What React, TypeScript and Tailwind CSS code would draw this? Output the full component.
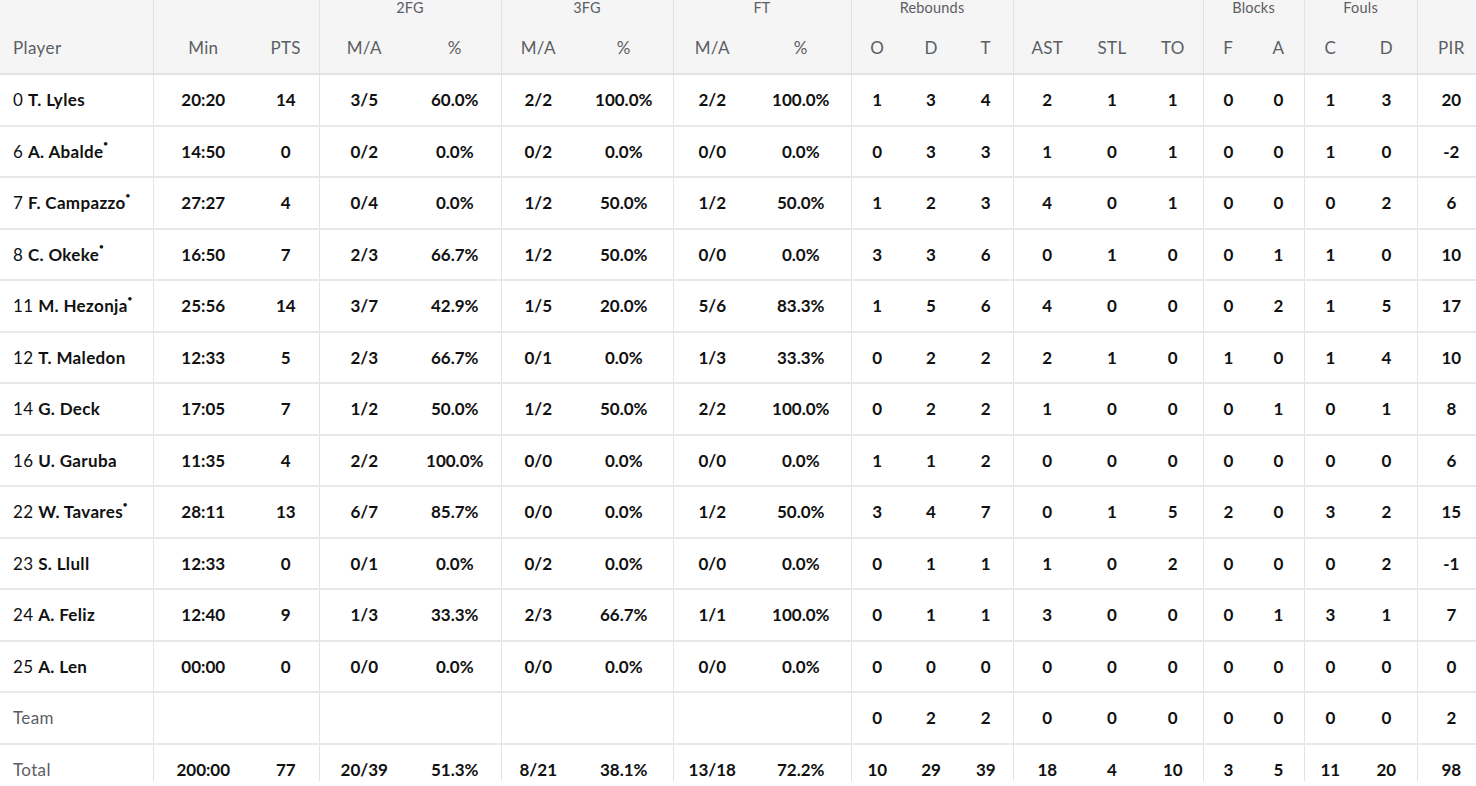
type Row = {
   no?: string;
   name: string;
   starter?: boolean;
   plain?: boolean;
   cells: (string | number)[];
};

const rows: Row[] = [
   { no: "0", name: "T. Lyles", cells: ["20:20", 14, "3/5", "60.0%", "2/2", "100.0%", "2/2", "100.0%", 1, 3, 4, 2, 1, 1, 0, 0, 1, 3, 20] },
   { no: "6", name: "A. Abalde", starter: true, cells: ["14:50", 0, "0/2", "0.0%", "0/2", "0.0%", "0/0", "0.0%", 0, 3, 3, 1, 0, 1, 0, 0, 1, 0, -2] },
   { no: "7", name: "F. Campazzo", starter: true, cells: ["27:27", 4, "0/4", "0.0%", "1/2", "50.0%", "1/2", "50.0%", 1, 2, 3, 4, 0, 1, 0, 0, 0, 2, 6] },
   { no: "8", name: "C. Okeke", starter: true, cells: ["16:50", 7, "2/3", "66.7%", "1/2", "50.0%", "0/0", "0.0%", 3, 3, 6, 0, 1, 0, 0, 1, 1, 0, 10] },
   { no: "11", name: "M. Hezonja", starter: true, cells: ["25:56", 14, "3/7", "42.9%", "1/5", "20.0%", "5/6", "83.3%", 1, 5, 6, 4, 0, 0, 0, 2, 1, 5, 17] },
   { no: "12", name: "T. Maledon", cells: ["12:33", 5, "2/3", "66.7%", "0/1", "0.0%", "1/3", "33.3%", 0, 2, 2, 2, 1, 0, 1, 0, 1, 4, 10] },
   { no: "14", name: "G. Deck", cells: ["17:05", 7, "1/2", "50.0%", "1/2", "50.0%", "2/2", "100.0%", 0, 2, 2, 1, 0, 0, 0, 1, 0, 1, 8] },
   { no: "16", name: "U. Garuba", cells: ["11:35", 4, "2/2", "100.0%", "0/0", "0.0%", "0/0", "0.0%", 1, 1, 2, 0, 0, 0, 0, 0, 0, 0, 6] },
   { no: "22", name: "W. Tavares", starter: true, cells: ["28:11", 13, "6/7", "85.7%", "0/0", "0.0%", "1/2", "50.0%", 3, 4, 7, 0, 1, 5, 2, 0, 3, 2, 15] },
   { no: "23", name: "S. Llull", cells: ["12:33", 0, "0/1", "0.0%", "0/2", "0.0%", "0/0", "0.0%", 0, 1, 1, 1, 0, 2, 0, 0, 0, 2, -1] },
   { no: "24", name: "A. Feliz", cells: ["12:40", 9, "1/3", "33.3%", "2/3", "66.7%", "1/1", "100.0%", 0, 1, 1, 3, 0, 0, 0, 1, 3, 1, 7] },
   { no: "25", name: "A. Len", cells: ["00:00", 0, "0/0", "0.0%", "0/0", "0.0%", "0/0", "0.0%", 0, 0, 0, 0, 0, 0, 0, 0, 0, 0, 0] },
   { name: "Team", plain: true, cells: ["", "", "", "", "", "", "", "", 0, 2, 2, 0, 0, 0, 0, 0, 0, 0, 2] },
   { name: "Total", plain: true, cells: ["200:00", 77, "20/39", "51.3%", "8/21", "38.1%", "13/18", "72.2%", 10, 29, 39, 18, 4, 10, 3, 5, 11, 20, 98] },
];

// widths of the 20 columns (table runs a bit past the viewport)
const colWidths = [
   "w-[153px]", "w-[100px]", "w-[66px]", "w-[90px]", "w-[92px]", "w-[74px]", "w-[98px]",
   "w-[78px]", "w-[100px]", "w-[52px]", "w-[56px]", "w-[54px]", "w-[68px]", "w-[62px]",
   "w-[60px]", "w-[50px]", "w-[51px]", "w-[52px]", "w-[61px]", "w-[68px]",
];

// column indexes (incl. player) that start a group
const groupStart = [1, 3, 5, 7, 9, 12, 15, 17, 19];

const subHeads = ["Min", "PTS", "M/A", "%", "M/A", "%", "M/A", "%", "O", "D", "T", "AST", "STL", "TO", "F", "A", "C", "D", "PIR"];

const groups: { label: string; span: number }[] = [
   { label: "", span: 2 },
   { label: "2FG", span: 2 },
   { label: "3FG", span: 2 },
   { label: "FT", span: 2 },
   { label: "Rebounds", span: 3 },
   { label: "", span: 3 },
   { label: "Blocks", span: 2 },
   { label: "Fouls", span: 2 },
   { label: "", span: 1 },
];

const cellBorder = (i: number) =>
   groupStart.includes(i) ? "border-l border-l-[#e3e3e3]" : "";

export default function App() {
   return (
      <div className="h-[781px] w-[1476px] overflow-hidden bg-white font-['Lato','Open_Sans',sans-serif]">
         <table className="w-[1485px] table-fixed border-collapse">
            <colgroup>
               {colWidths.map((w, i) => (
                  <col key={i} className={w} />
               ))}
            </colgroup>
            <thead className="bg-[#f5f5f5] text-[#5b5e64]">
               <tr className="h-[22px]">
                  <th className="p-0"></th>
                  {groups.map((g, i) => {
                     const start = groups.slice(0, i).reduce((a, b) => a + b.span, 1);
                     return (
                        <th
                           key={i}
                           colSpan={g.span}
                           className={`p-0 align-top text-[14.5px] leading-[16px] font-normal tracking-[0.2px] ${cellBorder(start)}`}
                        >
                           {g.label}
                        </th>
                     );
                  })}
               </tr>
               <tr className="h-[52px] border-b-2 border-b-[#e3e3e3]">
                  <th className="pl-[13px] text-left text-[17px] font-normal tracking-[0.4px]">Player</th>
                  {subHeads.map((h, i) => (
                     <th key={i} className={`p-0 text-center text-[17px] font-normal tracking-[0.3px] ${cellBorder(i + 1)}`}>
                        {h}
                     </th>
                  ))}
               </tr>
            </thead>
            <tbody className="text-[#111111]">
               {rows.map((r, ri) => (
                  <tr key={ri} className="h-[51.5px] border-b-2 border-b-[#e8e8e8]">
                     <td className="pl-[13px] text-left text-[17px] whitespace-nowrap tracking-[0.35px]">
                        {r.plain ? (
                           <span className="text-[#5b5e64]">{r.name}</span>
                        ) : (
                           <>
                              <span>{r.no} </span>
                              <span className="font-bold">{r.name}</span>
                              {r.starter && (
                                 <sup className="text-[7px] font-bold align-[8px]">●</sup>
                              )}
                           </>
                        )}
                     </td>
                     {r.cells.map((c, ci) => (
                        <td
                           key={ci}
                           className={`p-0 text-center text-[17px] font-bold ${cellBorder(ci + 1)}`}
                        >
                           {c}
                        </td>
                     ))}
                  </tr>
               ))}
            </tbody>
         </table>
      </div>
   );
}
